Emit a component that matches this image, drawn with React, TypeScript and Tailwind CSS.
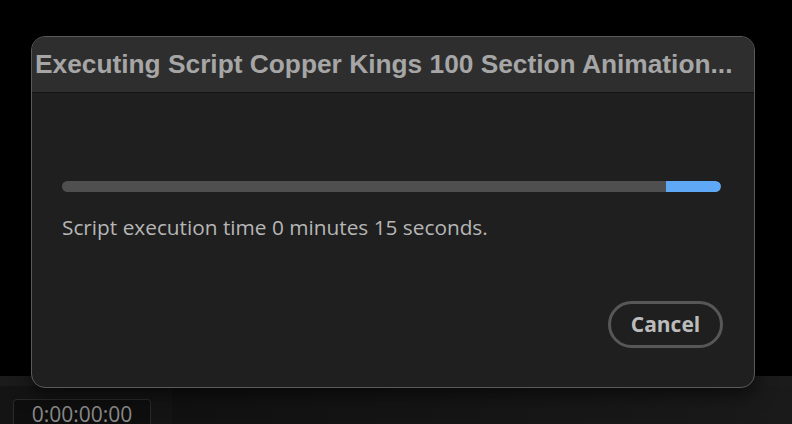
export default function App() {
  return (
    <div className="relative flex h-[424px] w-[792px] flex-col overflow-hidden bg-black">
      <div className="flex-1" />

      {/* panel behind the dialog */}
      <div className="flex h-[48px] flex-col">
        <div className="h-[10px] bg-[#1b1b1b]" />
        <div className="flex flex-1 bg-[#121212]">
          <div className="flex w-[172px] items-end bg-[#141414] pl-[13px]">
            <div className="flex h-[25px] w-[138px] items-start justify-center rounded-t-[4px] border border-b-0 border-[#2a2a2a] bg-[#0e0e0e] pt-[1px] font-['Open_Sans',sans-serif] text-[21px] leading-[26px] text-[#8a8a8a]">
              0:00:00:00
            </div>
          </div>
          <div className="flex-1 bg-gradient-to-r from-[#111111] to-[#1a1a1a]" />
        </div>
      </div>

      {/* dialog */}
      <div className="absolute left-[31px] top-[36px] flex h-[352px] w-[724px] flex-col overflow-hidden rounded-[14px] border-[1.5px] border-[#5a5a5a] bg-[#1f1f1f] shadow-[0_6px_20px_rgba(0,0,0,0.6)]">
        <div className="flex h-[56px] items-center border-b border-[#141414] bg-[#2e2e2e] pl-[3px]">
          <span className="whitespace-nowrap font-['Liberation_Sans',sans-serif] text-[26.3px] font-bold text-[#a6a6a6]">
            Executing Script Copper Kings 100 Section Animation...
          </span>
        </div>

        <div className="flex flex-1 flex-col px-[30px] pt-[88px] font-['Open_Sans',sans-serif]">
          <div className="flex h-[11px] w-[659px] overflow-hidden rounded-full bg-[#4f4f4f]">
            <div className="flex-1" />
            <div className="w-[55px] rounded-r-full bg-[#5ea8f6]" />
          </div>
          <div className="mt-[22px] text-[20.8px] leading-[26px] text-[#b6b6b6]">
            Script execution time 0 minutes 15 seconds.
          </div>

          <div className="mt-[61px] flex justify-end pr-[1px]">
            <button className="flex h-[47px] w-[115px] items-center justify-center rounded-full border-[3px] border-[#575757] text-[21px] font-bold text-[#bcbcbc]">
              Cancel
            </button>
          </div>
        </div>
      </div>
    </div>
  );
}
